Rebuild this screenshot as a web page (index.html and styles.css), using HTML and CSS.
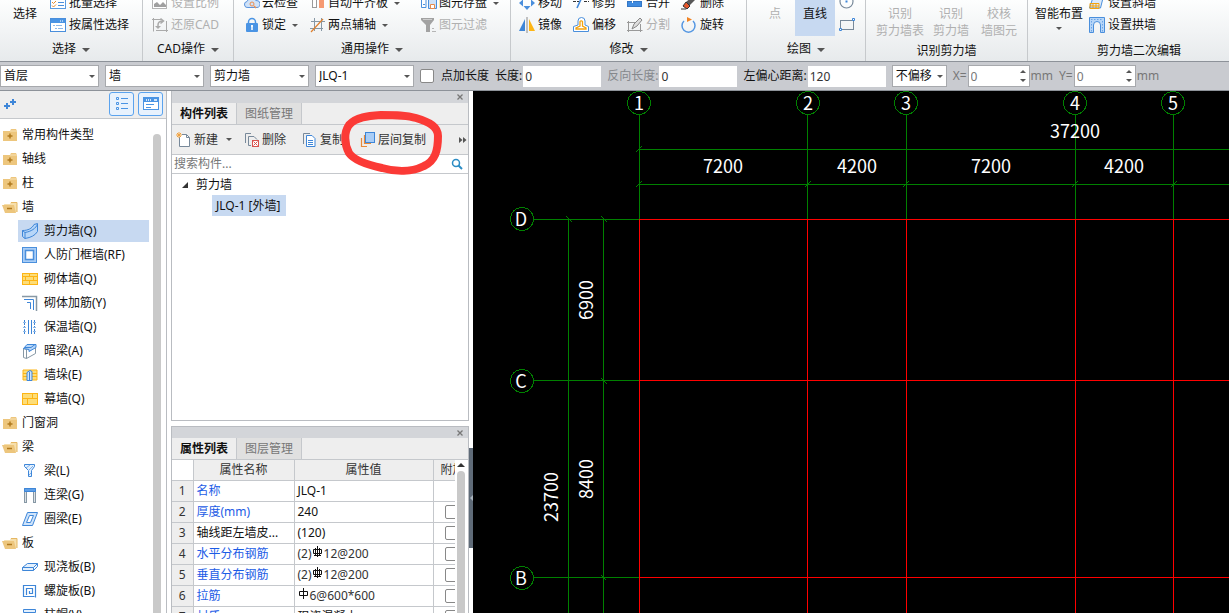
FILE: index.html
```
<!DOCTYPE html>
<html lang="zh-CN">
<head>
<meta charset="utf-8">
<title>剪力墙</title>
<link rel="stylesheet" href="styles.css">
</head>
<body>
<header class="ribbon">
  <section class="group g-select">
    <div class="tools">
      <button class="big">选择</button>
      <div class="stack">
        <button class="tool"><svg class="ic" viewBox="0 0 16 16"><rect x=".5" y="1.500" width="15" height="12" fill="#fff" stroke="#5b9be0"/><path d="M2 7l1.500 1.500L6 6M2 10.500L3.500 12 6 9.500" fill="none" stroke="#e58a2e"/><path d="M8 7.500h6M8 10.500h6" stroke="#4a8fdc"/></svg>批量选择</button>
        <button class="tool"><svg class="ic" viewBox="0 0 16 16"><rect x=".5" y="1.500" width="15" height="13" fill="#fff" stroke="#4a8fdc"/><path d="M1 2h14v4H1z" fill="#4a94e4"/><path d="M10 4h1m1 0h1" stroke="#fff"/><path d="M3 8.500h2m1 0h6M5 11.500h2m1 0h5" stroke="#8cb8ea"/></svg>按属性选择</button>
      </div>
    </div>
    <h2>选择<i class="caret"></i></h2>
  </section>
  <section class="group g-cad">
    <div class="tools">
      <div class="stack">
        <button class="tool" disabled><svg class="ic" viewBox="0 0 16 16"><rect x=".5" y="1.500" width="14" height="12" fill="#fff" stroke="#b5b5b5"/><path d="M2 12V9l3-2 3 3 3-3 3 3v2z" fill="#a0a0a0"/></svg>设置比例</button>
        <button class="tool" disabled><svg class="ic" viewBox="0 0 16 16"><path d="M1.500 14.500v-12H10M14.500 4v9.500H4M0 2.500h3M1.500 1v3M13 13.500h3M14.500 12v3" fill="none" stroke="#aaa"/><path d="M6 11V8c0-3 2-4 5-4M8.500 1.500L11.500 4 8.500 6.500" fill="none" stroke="#aaa" stroke-width="1.500"/><path d="M3 9l3 3 3-3z" fill="#aaa"/></svg>还原CAD</button>
      </div>
    </div>
    <h2>CAD操作<i class="caret"></i></h2>
  </section>
  <section class="group g-common">
    <div class="tools">
      <div class="stack">
        <button class="tool"><svg class="ic" viewBox="0 0 16 16"><path d="M4 12.500a3 3 0 0 1-1-6 5 5 0 0 1 9-1 3.500 3.500 0 0 1 1 7z" fill="#cfe2f8" stroke="#5b94dc"/><circle cx="8" cy="9" r="2" fill="none" stroke="#ee8f50"/><path d="M10 11l2 2" stroke="#ee8f50" stroke-width="1.500"/></svg>云检查</button>
        <button class="tool"><svg class="ic" viewBox="0 0 16 16"><path d="M4.500 7V5a3.500 3.500 0 0 1 7 0v2" fill="none" stroke="#4a94e4" stroke-width="1.500"/><rect x="2" y="6" width="12" height="9" rx="1" fill="#4a94e4"/><path d="M8 8v5M7 9h2" stroke="#fff" stroke-width="1.500"/></svg>锁定<i class="caret small"></i></button>
      </div>
      <div class="stack">
        <button class="tool"><svg class="ic" viewBox="0 0 16 16"><rect x="2.500" y="3.500" width="4" height="9" fill="#fff" stroke="#9a9a9a"/><path d="M9 2h5v11H9z" fill="#f59a73"/></svg>自动平齐板<i class="caret small"></i></button>
        <button class="tool"><svg class="ic" viewBox="0 0 16 16"><path d="M4.500 1v13M11.500 1v13M1 4.500h14M0 11.500h13" stroke="#8798a5"/><path d="M1 15L13 2" stroke="#e0802d" stroke-width="1.200"/></svg>两点辅轴<i class="caret small"></i></button>
      </div>
      <div class="stack">
        <button class="tool"><svg class="ic" viewBox="0 0 16 16"><path d="M.5 3v9.500H5V3z" fill="#fff" stroke="#4a8fdc"/><path d="M2 9.500h2" stroke="#4a8fdc"/><path d="M7.500 4.500h8v9h-8z" fill="#cfe2f8" stroke="#4a8fdc"/><path d="M9.500 9.500h4v4h-4z" fill="#fff" stroke="#e68a4b"/></svg>图元存盘<i class="caret small"></i></button>
        <button class="tool" disabled><svg class="ic" viewBox="0 0 16 16"><path d="M0 1h13v2L9 8v7H5V8L0 3z" fill="#a2a2a2"/><path d="M2 2.500h9" stroke="#ccc"/><path d="M11 11.500h2M11 14.500h4" stroke="#b5b5b5"/></svg>图元过滤</button>
      </div>
    </div>
    <h2>通用操作<i class="caret"></i></h2>
  </section>
  <section class="group g-modify">
    <div class="tools">
      <div class="stack">
        <button class="tool"><svg class="ic" viewBox="0 0 16 16"><path d="M8 0l3 4H5zM8 15l-3.500-4h7zM0 8l4-3.500v7zM16 8l-4-3.500v7z" fill="#4a8fdc"/></svg>移动</button>
        <button class="tool"><svg class="ic" viewBox="0 0 16 16"><path d="M6 2v12H0z" fill="#3e86d8"/><path d="M10 2v12h6z" fill="#fdb515"/><path d="M8 0v16" stroke="#8a8a8a"/></svg>镜像</button>
      </div>
      <div class="stack">
        <button class="tool"><svg class="ic" viewBox="0 0 16 16"><path d="M0 6.500h6M11 6.500h5" stroke="#333" stroke-dasharray="3 1"/><path d="M9 2L4 13" stroke="#3e86d8" stroke-width="1.600"/></svg>修剪</button>
        <button class="tool"><svg class="ic" viewBox="0 0 16 16"><path d="M.5 14.500V9.500L5 8V4a3.500 3.500 0 0 1 7 0v4l3.500 1.500v5z" fill="#fff" stroke="#4a8fdc"/><path d="M3 12h10v-1L9.500 9V4.500a1.500 1.500 0 0 0-2.500 0V9l-4 2z" fill="none" stroke="#f3a30f" stroke-width="1.300"/></svg>偏移</button>
      </div>
      <div class="stack">
        <button class="tool"><svg class="ic" viewBox="0 0 16 16"><rect x=".5" y="6.500" width="14" height="5" fill="#3e8be0" stroke="#3477c5"/><path d="M5.500 5v3" stroke="#fff"/></svg>合并</button>
        <button class="tool" disabled><svg class="ic" viewBox="0 0 16 16"><path d="M1.500 4v11M0 5.500h9M0 13.500h15.500M13.500 7v8" fill="none" stroke="#999"/><path d="M5 12l2-5 6-6 2 2-5 6z" fill="#ddd" stroke="#888"/></svg>分割</button>
      </div>
      <div class="stack">
        <button class="tool"><svg class="ic" viewBox="0 0 16 16"><path d="M5 7l7-6 3 3-7 7z" fill="#585858"/><path d="M5 7l4 4-3 3-4-3z" fill="#e4572c" stroke="#333"/><path d="M0 14h5" stroke="#333"/></svg>删除</button>
        <button class="tool"><svg class="ic" viewBox="0 0 16 16"><path d="M3 4a6.500 6.500 0 1 0 9 0" fill="none" stroke="#5597e2" stroke-width="1.500"/><path d="M6 0l5 2.500L6 5z" fill="#f08425"/></svg>旋转</button>
      </div>
    </div>
    <h2>修改<i class="caret"></i></h2>
  </section>
  <section class="group g-draw">
    <div class="tools">
      <button class="big" disabled>点</button>
      <button class="big on">直线</button>
      <div class="stack">
        <button class="tool" aria-label="圆"><svg class="ic" viewBox="0 0 16 16"><circle cx="7.500" cy="6.500" r="6.500" fill="none" stroke="#78899a" stroke-width="1.200"/><path d="M6.500 5.500h2v2h-2z" fill="#3e86d8"/></svg></button>
        <button class="tool" aria-label="矩形"><svg class="ic" viewBox="0 0 16 16"><rect x="1.500" y="3.500" width="13" height="9" fill="none" stroke="#78899a"/><path d="M13.500 1.500h2v2h-2zM.5 11.500h2v2h-2z" fill="#fff" stroke="#3e86d8"/></svg></button>
      </div>
    </div>
    <h2>绘图<i class="caret"></i></h2>
  </section>
  <section class="group g-identify">
    <div class="tools">
      <button class="big" disabled>识别<br>剪力墙表</button>
      <button class="big" disabled>识别<br>剪力墙</button>
      <button class="big" disabled>校核<br>墙图元</button>
    </div>
    <h2>识别剪力墙</h2>
  </section>
  <section class="group g-edit">
    <div class="tools">
      <button class="big">智能布置<i class="caret small"></i></button>
      <div class="stack">
        <button class="tool"><svg class="ic" viewBox="0 0 16 16"><path d="M4.500 1h10l-3 12H.5z" fill="#dbeafb" stroke="#4a8fdc"/><path d="M1 8.500h9v5H1zM4 8v5M7 8v5M1 11h9" fill="none" stroke="#f3a30f"/></svg>设置斜墙</button>
        <button class="tool"><svg class="ic" viewBox="0 0 16 16"><path d="M.5 .5h15v15h-4V8a3.500 3.500 0 0 0-7 0v7.500h-4z" fill="#b7d6f8" stroke="#4a8fdc"/><path d="M2 2.500h12M2.500 4v11M13.500 4v11" stroke="#6ba4e6" stroke-dasharray="1.500 1.500"/></svg>设置拱墙</button>
      </div>
    </div>
    <h2>剪力墙二次编辑</h2>
  </section>
</header>

<form class="options">
  <span class="pick"><select aria-label="楼层"><option>首层</option></select></span>
  <span class="pick"><select aria-label="构件分类"><option>墙</option></select></span>
  <span class="pick"><select aria-label="构件类型"><option>剪力墙</option></select></span>
  <span class="pick"><select aria-label="构件"><option>JLQ-1</option></select></span>
  <label class="check"><input type="checkbox">点加长度</label>
  <label class="field">长度:<input type="text" value="0"></label>
  <label class="field dim">反向长度:<input type="text" value="0"></label>
  <label class="field">左偏心距离:<input type="text" value="120"></label>
  <span class="pick narrow"><select aria-label="偏移"><option>不偏移</option></select></span>
  <label class="spin">X=<span class="spinbox"><input type="text" value="0" disabled><i class="up"></i><i class="down"></i></span>mm</label>
  <label class="spin">Y=<span class="spinbox"><input type="text" value="0" disabled><i class="up"></i><i class="down"></i></span>mm</label>
</form>

<svg class="defs" aria-hidden="true">
  <symbol id="closed" viewBox="0 0 16 16"><path d="M1 4h7l1-2h5l1 2v10H1z" fill="#edc67d"/><path d="M8 4h7" stroke="#f8e3b8"/><path d="M8 6.500v5M5.500 9h5" stroke="#b07a1e" stroke-width="1.500"/></symbol>
  <symbol id="open" viewBox="0 0 16 16"><path d="M2 5h6l1-2h6v10H4z" fill="#f6dfac"/><path d="M9 3.500h6V13" fill="none" stroke="#e5b763"/><path d="M0 6h12l2 8H3z" fill="#edc67d"/><path d="M5 9.500h5" stroke="#b07a1e" stroke-width="1.500"/></symbol>
</svg>

<main class="work">
  <nav class="side">
    <div class="sidebar-top">
      <svg class="ic" viewBox="0 0 16 16"><path d="M4 6v6M1 9h6M10 2v6M7 5h6" stroke="#3e86d8" stroke-width="2"/></svg>
      <button class="view" aria-label="列表"><svg class="ic" viewBox="0 0 16 16"><path d="M2.500 1.500h2v2h-2zM2.500 6.500h2v2h-2zM2.500 11.500h2v2h-2z" fill="none" stroke="#4a94e4"/><path d="M7 2.500h7M7 7.500h7M7 12.500h7" stroke="#4a94e4"/></svg></button>
      <button class="view" aria-label="窗口"><svg class="ic" viewBox="0 0 16 16"><rect x=".5" y="1.500" width="15" height="12" fill="#fff" stroke="#4a94e4"/><path d="M1 2h14v4H1z" fill="#4a94e4"/><path d="M3 4h1m1 0h1m1 0h1m3 0h3" stroke="#fff" stroke-width="1.500"/><path d="M3 8.500h8M3 11.500h5" stroke="#4a94e4"/></svg></button>
    </div>
    <div class="side-body">
      <ul class="tree">
        <li class="cat"><svg class="ic"><use href="#closed"/></svg>常用构件类型</li>
        <li class="cat"><svg class="ic"><use href="#closed"/></svg>轴线</li>
        <li class="cat"><svg class="ic"><use href="#closed"/></svg>柱</li>
        <li class="cat"><svg class="ic"><use href="#open"/></svg>墙</li>
        <li class="leaf on"><svg class="ic" viewBox="0 0 16 16"><path d="M.5 7.500C6 7.500 10 5.500 12 1.500L15.500.5v8C13 12.500 9 14.500 3 15.500l-2.500-2z" fill="#b7d6f8" stroke="#3e86d8"/><path d="M.5 7.500L3 9.500C9 8.500 14 5.500 15.500 1M3 9.500v6" fill="none" stroke="#3e86d8"/></svg>剪力墙(Q)</li>
        <li class="leaf"><svg class="ic" viewBox="0 0 16 16"><rect x=".5" y=".5" width="14" height="15" fill="#a9cdf6" stroke="#4a8fdc"/><rect x="3.500" y="3.500" width="8" height="9" fill="#fff" stroke="#4a8fdc" stroke-width="1.500"/></svg>人防门框墙(RF)</li>
        <li class="leaf"><svg class="ic" viewBox="0 0 16 16"><path d="M0 2h16v12H0z" fill="#fdb515"/><path d="M1 3h6v2H1zM8 3h7v2H8zM1 6h2v3H1zM4 6h7v3H4zM12 6h3v3h-3zM1 10h6v3H1zM8 10h7v3H8z" fill="#fddd78"/></svg>砌体墙(Q)</li>
        <li class="leaf"><svg class="ic" viewBox="0 0 16 16"><path d="M0 1.500h14.500V16" fill="none" stroke="#8798a5" stroke-width="1.500"/><path d="M2 4.500h9.500V15M5 7.500h3.500V14" fill="none" stroke="#3e86d8"/></svg>砌体加筋(Y)</li>
        <li class="leaf"><svg class="ic" viewBox="0 0 16 16"><path d="M2.500 1v14M12.500 1v14" stroke="#3e86d8" stroke-dasharray="2 1"/><path d="M6.500 1v14M9.500 1v14" stroke="#3e86d8"/><path d="M1 3.500h3m7 0h3M1 8.500h3m7 0h3M1 12.500h3m7 0h3" stroke="#8fb9e8"/></svg>保温墙(Q)</li>
        <li class="leaf"><svg class="ic" viewBox="0 0 16 16"><path d="M4.500 15.500v-9l9-4v8z" fill="#fff" stroke="#8798a5"/><path d="M1.500 5.500v9l3 1v-9z" fill="#fff" stroke="#8798a5"/><path d="M1.500 5.500L5 1.500h9v3l-7 4v-2z" fill="#b7d6f8" stroke="#3e86d8"/><path d="M3 4.500h6l4-3" fill="none" stroke="#3e86d8"/></svg>暗梁(A)</li>
        <li class="leaf"><svg class="ic" viewBox="0 0 16 16"><path d="M1 3h14v10H1z" fill="#fddd78" stroke="#fdb515"/><path d="M1 6.500h14M1 9.500h14" stroke="#fdb515"/><path d="M5 5.500l3-2 2 1v9H5z" fill="#cfe4fb" stroke="#3e86d8"/><path d="M7.500 5v9" stroke="#3e86d8"/></svg>墙垛(E)</li>
        <li class="leaf"><svg class="ic" viewBox="0 0 16 16"><path d="M0 2h16v12H0z" fill="#fdb515"/><path d="M1 3h9v4H1zM11 3h4v4h-4zM1 8h4v5H1zM6 8h9v5H6z" fill="#fddd78"/></svg>幕墙(Q)</li>
        <li class="cat"><svg class="ic"><use href="#closed"/></svg>门窗洞</li>
        <li class="cat"><svg class="ic"><use href="#open"/></svg>梁</li>
        <li class="leaf"><svg class="ic" viewBox="0 0 16 16"><path d="M2.500 1.500h10v2l-3 4v6h-3v-6l-4-4z" fill="#e3f0fd" stroke="#3e86d8"/><path d="M4 5l4-3M6 8l5-5M7 12l2-2" stroke="#7db0ec"/></svg>梁(L)</li>
        <li class="leaf"><svg class="ic" viewBox="0 0 16 16"><path d="M3.500 1v15M12.500 1v15" stroke="#8798a5" stroke-width="3"/><path d="M3.500 2v13M12.500 2v13" stroke="#dce1e5"/><path d="M2.500 1.500h11v3h-11z" fill="#5f9fe6" stroke="#3e86d8"/></svg>连梁(G)</li>
        <li class="leaf"><svg class="ic" viewBox="0 0 16 16"><path d="M5.500 1.500h10l-5 13H.5zM7.500 4.500l-3 7h4l3-7z" fill="#cfe4fb" fill-rule="evenodd" stroke="#3e86d8"/></svg>圈梁(E)</li>
        <li class="cat"><svg class="ic"><use href="#open"/></svg>板</li>
        <li class="leaf"><svg class="ic" viewBox="0 0 16 16"><path d="M.5 8.500l5-4h10l-4 4zM.5 8.500v3h11v-3M11.500 11.500l4-4v-3" fill="#e3f0fd" stroke="#3e86d8"/></svg>现浇板(B)</li>
        <li class="leaf"><svg class="ic" viewBox="0 0 16 16"><path d="M12.500 13.500h-11v-11h12v12M4.500 12V5.500h6v5h-3V8" fill="none" stroke="#3e86d8" stroke-width="1.200"/></svg>螺旋板(B)</li>
        <li class="leaf"><svg class="ic" viewBox="0 0 16 16"><path d="M1.500 2.500h12v3l-3 2v8h-6v-8l-3-2zM2 5.500h11M5 8.500h6" fill="#e3f0fd" stroke="#3e86d8"/></svg>柱帽(V)</li>
      </ul>
      <div class="bar"></div>
    </div>
  </nav>

  <div class="docks">
    <section class="dock components">
      <div class="grip"><button class="close" aria-label="关闭"><svg viewBox="0 0 6 6"><path d="M.5.5l5 5M5.500.5l-5 5" stroke="#777" stroke-width="1.300"/></svg></button></div>
      <div class="tabs"><button class="tab on">构件列表</button><button class="tab">图纸管理</button></div>
      <div class="actions">
        <button class="act first"><svg class="ic" viewBox="0 0 16 16"><path d="M3.500 5v9.500h10v-9l-3-3H6" fill="#fff" stroke="#78899a"/><path d="M10.500 2.500v3h3" fill="none" stroke="#78899a"/><path d="M0 3h6M3 0v6M1 1l4 4M5 1L1 5" stroke="#f2a13c"/></svg>新建<i class="caret small"></i></button>
        <button class="act"><svg class="ic" viewBox="0 0 16 16"><path d="M1.500 11V1.500H7M7 13.500H4.500v-9H10l3 3" fill="none" stroke="#78899a"/><rect x="8.500" y="8.500" width="6" height="6" fill="#fff" stroke="#d9534f"/><path d="M9.500 9.500l4 4m0-4l-4 4" stroke="#d9534f"/></svg>删除</button>
        <button class="act copy"><svg class="ic" viewBox="0 0 16 16"><path d="M1.500 12V1.500H8" fill="none" stroke="#78899a"/><path d="M4.500 3.500H10l3 3v8H4.500z" fill="#fff" stroke="#3e86d8"/><path d="M6 8.500h5M6 10.500h5M6 12.500h5" stroke="#3e86d8"/></svg>复制</button>
        <button class="act"><svg class="ic" viewBox="0 0 16 16"><path d="M1.500 6v8.500H7M4.500 3v8.500H11" fill="none" stroke="#e8893a" stroke-width="1.200"/><rect x="5.500" y=".5" width="9" height="10" fill="#a9cdf6" stroke="#3e86d8"/></svg>层间复制</button>
        <button class="more" aria-label="更多"><svg viewBox="0 0 8 6"><path d="M0 0l3.500 3L0 6zM4 0l3.500 3L4 6z" fill="#555"/></svg></button>
      </div>
      <label class="search"><input type="text" placeholder="搜索构件..." aria-label="搜索构件"><svg viewBox="0 0 12 12"><circle cx="5" cy="5" r="3.500" fill="none" stroke="#2b8cc4" stroke-width="1.500"/><path d="M7.500 7.500L11 11" stroke="#2b8cc4" stroke-width="2"/></svg></label>
      <div class="items">
        <div class="node"><svg viewBox="0 0 6 6"><path d="M6 0v6H0z" fill="#333"/></svg>剪力墙</div>
        <div class="item">JLQ-1 [外墙]</div>
      </div>
    </section>
    <section class="dock props">
      <div class="grip"><button class="close" aria-label="关闭"><svg viewBox="0 0 6 6"><path d="M.5.5l5 5M5.500.5l-5 5" stroke="#777" stroke-width="1.300"/></svg></button></div>
      <div class="tabs"><button class="tab on">属性列表</button><button class="tab">图层管理</button></div>
      <div class="grid">
        <div class="clip">
        <table>
          <colgroup><col class="c-num"><col class="c-name"><col class="c-value"><col class="c-extra"></colgroup>
          <thead><tr><th class="corner"></th><th>属性名称</th><th>属性值</th><th class="extra">附加</th></tr></thead>
          <tbody>
            <tr><th>1</th><td class="key">名称</td><td>JLQ-1</td><td></td></tr>
            <tr><th>2</th><td class="key">厚度(mm)</td><td>240</td><td class="tick"><input type="checkbox" aria-label="厚度附加"></td></tr>
            <tr><th>3</th><td>轴线距左墙皮...</td><td>(120)</td><td class="tick"><input type="checkbox" aria-label="轴线附加"></td></tr>
            <tr><th>4</th><td class="key">水平分布钢筋</td><td class="soft">(2)<svg class="bar-sign" viewBox="0 0 11 12"><path d="M1.500 3.500h8v4h-8zM5.500 0v11M3.500 2v7M7.500 2v7M2 9.500h7" fill="none" stroke="#111"/></svg>12@200</td><td class="tick"><input type="checkbox" aria-label="水平筋附加"></td></tr>
            <tr><th>5</th><td class="key">垂直分布钢筋</td><td class="soft">(2)<svg class="bar-sign" viewBox="0 0 11 12"><path d="M1.500 3.500h8v4h-8zM5.500 0v11M3.500 2v7M7.500 2v7M2 9.500h7" fill="none" stroke="#111"/></svg>12@200</td><td class="tick"><input type="checkbox" aria-label="垂直筋附加"></td></tr>
            <tr><th>6</th><td class="key">拉筋</td><td class="soft"><svg class="bar-sign" viewBox="0 0 11 12"><path d="M1.500 3.500h8v4h-8zM5.500 0v11" fill="none" stroke="#111"/></svg>6@600*600</td><td class="tick"><input type="checkbox" aria-label="拉筋附加"></td></tr>
            <tr><th>7</th><td class="key">材质</td><td>现浇混凝土</td><td class="tick"><input type="checkbox" aria-label="材质附加"></td></tr>
          </tbody>
        </table>
        </div>
        <div class="scroll"><i class="up"></i><div class="thumb"></div></div>
      </div>
    </section>
  </div>
  <div class="splitter"><div class="handle"><svg viewBox="0 0 4 6"><path d="M4 0v6L1 3z" fill="#aab4bd"/></svg></div></div>

  <div class="canvas">
    <svg class="drawing">
      <g transform="translate(-473 -91)" shape-rendering="crispEdges" fill="none" stroke="#008000">
        <path d="M639.5 115v104M807.500 115v104M906.500 115v104M1075.500 115v104M1173.500 115v104"/>
        <path d="M639 149.500h2000M639 184.500h2000M534 219.500h105M534 380.500h105M534 577.500h105M568.500 219v2000M603.500 219v2000"/>
        <path d="M635.500 152.500l6-6M635.500 187.500l6-6M804.500 187.500l6-6M902.500 187.500l6-6M1071.500 187.500l6-6M1170.500 187.500l6-6M566.500 216.500l6 6M601.500 216.500l6 6M601.500 378.500l6 6M601.500 575.500l5 5"/>
        <path stroke="#f00" d="M639.500 219v2000M807.500 219v2000M906.500 219v2000M1075.500 219v2000M1173.500 219v2000M639 219.500h2000M639 380.500h2000M639 577.500h2000"/>
        <g fill="#000">
          <circle cx="639" cy="103" r="11.500"/><circle cx="808" cy="103" r="11.500"/><circle cx="906" cy="103" r="11.500"/><circle cx="1075" cy="103" r="11.500"/><circle cx="1173" cy="103" r="11.500"/>
          <circle cx="522" cy="219" r="11.500"/><circle cx="522" cy="381" r="11.500"/><circle cx="522" cy="578" r="11.500"/>
        </g>
      </g>
      <g class="marks" transform="translate(-473 -91)">
        <text x="639" y="110">1</text><text x="808" y="110">2</text><text x="906" y="110">3</text><text x="1075" y="110">4</text><text x="1173" y="110">5</text>
        <text x="521" y="226">D</text><text x="521" y="388">C</text><text x="521" y="585">B</text>
        <text x="1075" y="138">37200</text>
        <text x="723" y="173">7200</text><text x="857" y="173">4200</text><text x="991" y="173">7200</text><text x="1124" y="173">4200</text>
        <text transform="translate(593 300) rotate(-90)">6900</text>
        <text transform="translate(593 479) rotate(-90)">8400</text>
        <text transform="translate(558 497) rotate(-90)">23700</text>
      </g>
    </svg>
  </div>
</main>
<svg class="redline" viewBox="0 0 110 76" aria-hidden="true"><path d="M13 20C20 12 32 11 45 10C60 10 70 10 80 13C94 17 102 22 102 31C102 46 99 56 88 61C76 67 60 67 46 63C32 60 18 55 13 48C8 38 8 27 13 20Z" fill="none" stroke="#fb3a36" stroke-width="8" stroke-linecap="round" stroke-linejoin="round"/></svg>
</body>
</html>
```
FILE: styles.css
```
* { box-sizing: border-box; }
body {
  margin: 0;
  height: 100vh;
  overflow: hidden;
  display: flex;
  flex-direction: column;
  background: #fff;
  color: #111;
  font: 12px/18px "Noto Sans", "Noto Sans CJK SC", sans-serif;
}
button, input, select { font: inherit; color: inherit; margin: 0; }
button { border: 0; padding: 0; background: none; white-space: nowrap; }
.ic { width: 16px; height: 16px; flex: none; }
.defs { display: none; }
.caret {
  display: inline-block;
  border: 4px solid transparent;
  border-top-color: #555;
  border-bottom: 0;
  margin-left: 6px;
  vertical-align: middle;
}
.caret.small { border-width: 3px 3px 0; }

/* Ribbon */
.ribbon {
  flex: none;
  display: flex;
  height: 62px;
  overflow: hidden;
  background: linear-gradient(#fdfefe, #e7eaec);
  border-bottom: 1px solid #8d9299;
}
.group {
  flex: none;
  display: flex;
  flex-direction: column;
  justify-content: flex-end;
  border-right: 1px solid #c6c9cc;
}
.group h2 {
  flex: none;
  margin: 0;
  height: 25px;
  font: inherit;
  line-height: 26px;
  text-align: center;
}
.tools { flex: none; display: flex; align-items: flex-end; height: 36px; }
.stack { display: flex; flex-direction: column; }
.tool { display: flex; align-items: center; gap: 3px; height: 22px; }
.tool .caret { margin-left: 4px; }
.big { height: 36px; padding-top: 5px; line-height: 17px; text-align: center; display: block; }
button:disabled { color: #b0b0b0; }
.g-select { width: 143px; }
.g-select .big { width: 50px; padding-bottom: 14px; }
.g-cad { width: 91px; }
.g-cad .tools { padding-left: 9px; }
.g-common { width: 277px; }
.g-common .tools { padding-left: 10px; }
.g-common .tool { gap: 2px; }
.g-common .stack { width: 66px; }
.g-common .stack:nth-child(2) { width: 111px; }
.g-common .stack:nth-child(3) { width: 86px; }
.g-modify { width: 236px; }
.g-modify .tools { padding-left: 8px; }
.g-modify .stack { width: 54px; }
.g-draw { width: 119px; }
.g-draw .tools { padding-left: 8px; }
.g-draw .big { width: 40px; padding-bottom: 14px; }
.g-draw .on { background: #c7d9f1; margin-right: 4px; }
.g-identify { width: 162px; }
.g-identify .tools { padding-left: 9px; gap: 1px; }
.g-identify .big { width: 50px; }
.g-identify .big:nth-child(3) { width: 44px; }
.g-identify h2, .g-edit h2 { line-height: 30px; }
.g-edit { flex: 1; border-right: 0; }
.g-edit .tools { padding-left: 3px; gap: 2px; }
.g-edit .big { width: 56px; }
.g-edit .big .caret { display: block; width: 6px; margin: 5px auto 6px; }
.g-edit h2 { padding-left: 69px; text-align: left; }

/* Options bar */
.options {
  flex: none;
  display: flex;
  align-items: center;
  gap: 6px;
  height: 29px;
  background: #c9cbd0;
  border-bottom: 1px solid #8d9299;
  white-space: nowrap;
}
.pick { position: relative; flex: none; width: 99px; height: 22px; }
.pick select {
  appearance: none;
  width: 100%;
  height: 100%;
  padding: 0 3px;
  border: 1px solid #a7a9ad;
  border-radius: 0;
  background: #fff;
}
.pick::after {
  content: "";
  position: absolute;
  right: 4px;
  top: 10px;
  border: 3px solid transparent;
  border-top-color: #555;
  border-bottom: 0;
}
.pick.narrow { width: 55px; }
.check { display: flex; align-items: center; gap: 7px; }
input[type="checkbox"] {
  appearance: none;
  flex: none;
  width: 14px;
  height: 14px;
  border: 1px solid #888;
  border-radius: 2px;
  background: #fff;
}
.field { display: flex; align-items: center; gap: 1px; }
.field input {
  width: 78px;
  height: 21px;
  padding: 0 2px;
  border: 0;
  background: #fff;
  color: #333;
}
.dim { color: #85888c; }
.spin { display: flex; align-items: center; gap: 1px; color: #777; }
.spinbox { position: relative; width: 62px; height: 22px; }
.spinbox input {
  width: 100%;
  height: 100%;
  padding: 0 2px;
  border: 1px solid #a7a9ad;
  background: #fff;
}
.spinbox i { position: absolute; right: 4px; border: 3px solid transparent; }
.spinbox .up { top: 5px; border-top: 0; border-bottom-color: #555; }
.spinbox .down { bottom: 5px; border-bottom: 0; border-top-color: #555; }

/* Work area */
.work { flex: 1; min-height: 0; display: flex; }
.side {
  flex: none;
  width: 167px;
  display: flex;
  flex-direction: column;
  border-right: 1px solid #b9bcc1;
}
.sidebar-top {
  flex: none;
  display: flex;
  gap: 4px;
  height: 28px;
  padding: 1px 3px;
  background: #eee;
  border-bottom: 1px solid #c5c8cc;
}
.sidebar-top > .ic { margin: 5px auto 0 0; }
.view {
  display: flex;
  align-items: center;
  justify-content: center;
  width: 25px;
  height: 24px;
  border: 1px solid #5ba3ee;
  border-radius: 3px;
  background: #e8f2fd;
}
.side-body { flex: 1; min-height: 0; display: flex; overflow: hidden; padding-right: 5px; }
.tree { flex: 1; margin: 0; padding: 4px 4px 0 2px; list-style: none; }
.tree li { display: flex; align-items: center; height: 24px; white-space: nowrap; }
.cat { gap: 4px; }
.leaf { gap: 6px; margin-left: 16px; padding-left: 4px; }
.tree .leaf.on { height: 22px; margin-top: 1px; margin-bottom: 1px; background: #c7d9f1; }
.bar { flex: none; width: 8px; margin-top: 15px; border-radius: 4px 4px 0 0; background: #c9c9c9; }

.docks { flex: none; width: 302px; padding-left: 4px; display: flex; flex-direction: column; gap: 5px; }
.dock {
  display: flex;
  flex-direction: column;
  border: 1px solid #b9bcc1;
  background: #fff;
  overflow: hidden;
}
.components { flex: 331; min-height: 0; border-top: 0; }
.props { flex: 187; min-height: 0; border-bottom: 0; }
.grip { flex: none; display: flex; justify-content: flex-end; align-items: center; height: 12px; padding-right: 5px; background: #d3d5d9; }
.props .grip { height: 11px; }
.close { display: flex; }
.close svg { width: 6px; height: 6px; }
.tabs { flex: none; display: flex; height: 22px; background: #eee; border-bottom: 1px solid #c5c8cc; }
.tab { width: 65px; color: #777; background: #e0e0e0; border-right: 1px solid #c5c8cc; }
.tab.on { color: #111; background: #eee; font-weight: bold; }
.actions { flex: none; display: flex; align-items: center; height: 30px; padding-left: 4px; background: #eee; border-bottom: 1px solid #c5c8cc; }
.act { display: flex; align-items: center; gap: 2px; margin-right: 16px; color: #333; }
.act.first { margin-right: 12px; }
.more { margin-left: auto; padding-right: 1px; display: flex; }
.more svg { width: 8px; height: 6px; }
.search { flex: none; display: flex; align-items: center; height: 19px; padding-right: 5px; border-bottom: 1px solid #c5c8cc; }
.search input { flex: 1; min-width: 0; height: 18px; padding: 0 2px; border: 0; outline: 0; background: none; }
.search input::placeholder { color: #777; }
.search svg { width: 12px; height: 12px; }
.node { display: flex; align-items: center; gap: 8px; height: 21px; padding-left: 10px; }
.node svg { width: 6px; height: 6px; }
.item { width: fit-content; margin-left: 40px; padding: 0 6px 0 4px; height: 21px; line-height: 21px; background: #c7d9f1; }

.grid { flex: 1; min-height: 0; display: flex; overflow: hidden; }
.clip { width: 283px; overflow: hidden; }
table { width: 303px; table-layout: fixed; border-collapse: collapse; }
.c-num { width: 21px; }
.c-name { width: 101px; }
.c-value { width: 139px; }
.c-extra { width: 42px; }
th, td {
  height: 21px;
  padding: 0 3px;
  border-right: 1px solid #c5c8cc;
  border-bottom: 1px solid #c5c8cc;
  white-space: nowrap;
  overflow: hidden;
  font-weight: normal;
  text-align: left;
}
thead th { height: 20px; background: #eee; text-align: center; color: #333; }
thead .corner { background: #fff; }
thead .extra { text-align: left; padding-left: 7px; }
tbody th { background: #eee; text-align: center; color: #333; }
.key { color: #1c5ce6; }
.soft { color: #333; }
.tick { padding-left: 11px; }
.tick input { display: block; }
.bar-sign { width: 11px; height: 12px; margin-right: 1px; }
.scroll { width: 8px; display: flex; flex-direction: column; align-items: center; gap: 4px; padding-top: 3px; margin-left: 2px; }
.scroll .up { border: 4px solid transparent; border-top: 0; border-bottom-color: #333; }
.thumb { flex: 1; width: 8px; border-radius: 4px 4px 0 0; background: #c9c9c9; }
.splitter { flex: none; width: 4px; display: flex; align-items: center; background: #fff; }
.handle { display: flex; align-items: center; width: 4px; height: 100px; margin-top: 292px; background: #5f6b78; }
.handle svg { width: 4px; height: 6px; }

.canvas { flex: 1; min-width: 0; background: #000; }
.drawing { display: block; width: 100%; height: 100%; }
.marks { fill: #fff; font: 18px "Noto Sans CJK SC", sans-serif; text-anchor: middle; }
.redline { position: absolute; left: 336px; top: 105px; width: 110px; height: 76px; pointer-events: none; }
```
